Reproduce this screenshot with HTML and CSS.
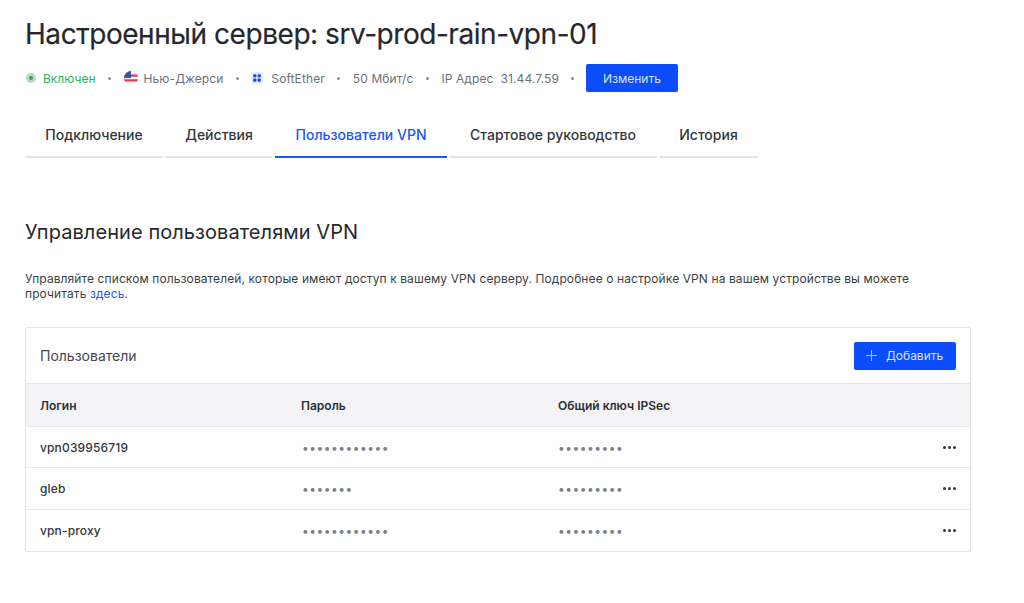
FILE: index.html
```html
<!DOCTYPE html>
<html lang="ru">
<head>
    <meta charset="UTF-8">
    <meta name="viewport" content="width=device-width, initial-scale=1.0">
    <title>Настроенный сервер</title>
    <link rel="stylesheet" href="styles.css">
</head>
<body>

<div class="container">
    <h1>Настроенный сервер: srv-prod-rain-vpn-01</h1>

    <div class="meta">
        <span class="meta-item status">
            <svg class="icon" width="10" height="10" viewBox="0 0 10 10"><circle cx="5" cy="5" r="5" fill="#b5dcbc"/><circle cx="5" cy="5" r="2" fill="#2fa84f"/></svg>
            Включен
        </span>
        <span class="sep"></span>
        <span class="meta-item">
            <svg class="icon" width="14" height="14" viewBox="0 0 14 14">
                <circle cx="7" cy="7" r="7" fill="#f4f4f6"/>
                <path d="M1 3.4h12a7 7 0 0 1 .9 2.4H.1A7 7 0 0 1 1 3.4zM.1 8.2h13.8a7 7 0 0 1-.9 2.4H1a7 7 0 0 1-.9-2.4z" fill="#e8384f"/>
                <path d="M7 0a7 7 0 0 0-7 7h7z" fill="#3f51a8"/>
            </svg>
            Нью-Джерси
        </span>
        <span class="sep"></span>
        <span class="meta-item">
            <svg class="icon icon-soft" width="12" height="12" viewBox="0 0 12 12">
                <rect width="12" height="12" rx="2" fill="#e6ecfb"/>
                <rect x="2.2" y="2.2" width="3.2" height="3.2" rx=".8" fill="#0b4df5"/>
                <rect x="6.6" y="2.2" width="3.2" height="3.2" rx=".8" fill="#0b4df5"/>
                <rect x="2.2" y="6.6" width="3.2" height="3.2" rx=".8" fill="#0b4df5"/>
                <rect x="6.6" y="6.6" width="3.2" height="3.2" rx=".8" fill="#0b4df5"/>
            </svg>
            SoftEther
        </span>
        <span class="sep"></span>
        <span class="meta-item">50 Мбит/с</span>
        <span class="sep"></span>
        <span class="meta-item ip">IP Адрес <span>31.44.7.59</span></span>
        <span class="sep"></span>
        <button class="btn btn-edit">Изменить</button>
    </div>

    <div class="tabs">
        <a class="tab tab-1">Подключение</a>
        <a class="tab tab-2">Действия</a>
        <a class="tab tab-3 active">Пользователи VPN</a>
        <a class="tab tab-4">Стартовое руководство</a>
        <a class="tab tab-5">История</a>
    </div>

    <h2>Управление пользователями VPN</h2>

    <p class="intro">Управляйте списком пользователей, которые имеют доступ к вашему VPN серверу. Подробнее о настройке VPN на вашем устройстве вы можете<br>прочитать <a href="#">здесь</a>.</p>

    <div class="card">
        <div class="card-head">
            <span>Пользователи</span>
            <button class="btn btn-add">
                <svg width="11" height="11" viewBox="0 0 11 11"><path d="M5.5 0v11M0 5.5h11" stroke="#a9c2ff" stroke-width="1" fill="none"/></svg>
                Добавить
            </button>
        </div>
        <div class="row row-head">
            <div>Логин</div>
            <div>Пароль</div>
            <div>Общий ключ IPSec</div>
            <div></div>
        </div>
        <div class="row">
            <div class="login">vpn039956719</div>
            <div class="dots">••••••••••••</div>
            <div class="dots">•••••••••</div>
            <div class="more"><i></i><i></i><i></i></div>
        </div>
        <div class="row">
            <div class="login">gleb</div>
            <div class="dots">•••••••</div>
            <div class="dots">•••••••••</div>
            <div class="more"><i></i><i></i><i></i></div>
        </div>
        <div class="row">
            <div class="login">vpn-proxy</div>
            <div class="dots">••••••••••••</div>
            <div class="dots">•••••••••</div>
            <div class="more"><i></i><i></i><i></i></div>
        </div>
    </div>
</div>

</body>
</html>
```

FILE: styles.css
```css
body {
    font-family: Inter, "Noto Sans", sans-serif;
    background-color: #ffffff;
    margin: 0;
    padding: 0;
    color: #26282d;
}

.container {
    width: 946px;
    margin-left: 25px;
    padding-top: 16px;
}

h1 {
    margin: 0;
    font-size: 28px;
    line-height: 36px;
    font-weight: 400;
    letter-spacing: -0.45px;
    -webkit-text-stroke: 0.2px #26282d;
}

.meta {
    display: flex;
    align-items: center;
    margin-top: 12px;
    height: 28px;
    font-size: 12px;
    letter-spacing: 0.1px;
    color: #6d7178;
}

.meta-item {
    display: flex;
    align-items: center;
    white-space: nowrap;
}

.icon {
    margin-right: 6px;
}

.icon-soft {
    margin-right: 8px;
}

.status {
    color: #2fb350;
    letter-spacing: 0;
    margin-left: 1px;
}

.status .icon {
    margin-right: 7px;
}

.ip span {
    margin-left: 7px;
}

.sep {
    width: 3px;
    height: 3px;
    border-radius: 50%;
    background: #8b8f96;
    margin: 0 12.5px;
}

.btn {
    font-family: inherit;
    border: none;
    border-radius: 2px;
    background-color: #0b4dfb;
    color: #d9e4ff;
    cursor: pointer;
    font-size: 12px;
}

.btn-edit {
    width: 92px;
    height: 28px;
    margin-left: -1px;
}

.tabs {
    display: flex;
    gap: 2px;
    margin-top: 23px;
}

.tab {
    display: block;
    box-sizing: border-box;
    height: 43px;
    line-height: 40px;
    text-align: center;
    font-size: 14px;
    font-weight: 500;
    border-bottom: 2px solid #e4e5e7;
    color: #33363b;
}

.tab-1 { width: 138px; }
.tab-2 { width: 108px; }
.tab-3 { width: 172px; }
.tab-4 { width: 208px; }
.tab-5 { width: 99px; }

.tab.active {
    color: #1d56f0;
    border-bottom-color: #1d56f0;
}

h2 {
    margin: 62px 0 0;
    font-size: 20px;
    line-height: 24px;
    font-weight: 400;
    letter-spacing: 0.07px;
}

.intro {
    margin: 27px 0 0;
    font-size: 12px;
    line-height: 15px;
    letter-spacing: 0.1px;
    color: #3c3f45;
}

.intro a {
    color: #1d56f0;
    text-decoration: none;
}

.card {
    margin-top: 26px;
    border: 1px solid #e2e3e5;
    border-radius: 2px;
}

.card-head {
    display: flex;
    align-items: center;
    justify-content: space-between;
    height: 55px;
    padding: 0 14px;
    font-size: 14px;
    color: #44474d;
    border-bottom: 1px solid #e2e3e5;
}

.btn-add {
    display: flex;
    align-items: center;
    gap: 9px;
    width: 102px;
    height: 28px;
    padding: 0 0 0 12px;
}

.row {
    display: grid;
    grid-template-columns: 261px 257px 1fr 20px;
    align-items: center;
    height: 41px;
    padding: 0 14px;
    font-size: 12px;
    border-bottom: 1px solid #e6eaef;
}

.row:last-child {
    border-bottom: none;
}

.row-head {
    height: 42px;
    background: #f4f4f6;
    font-weight: 600;
    color: #2c2f34;
}

.row-head + .row {
    height: 40px;
}

.login {
    color: #33363b;
    font-weight: 500;
    letter-spacing: 0.15px;
}

.dots {
    color: #7c8087;
    font-size: 12px;
    letter-spacing: 0.5px;
    padding-left: 1px;
}

.dots + .dots {
    padding-left: 0;
}

.more {
    display: flex;
    gap: 2px;
    justify-content: flex-end;
}

.more i {
    width: 3px;
    height: 3px;
    border-radius: 50%;
    background: #33363b;
}
```
